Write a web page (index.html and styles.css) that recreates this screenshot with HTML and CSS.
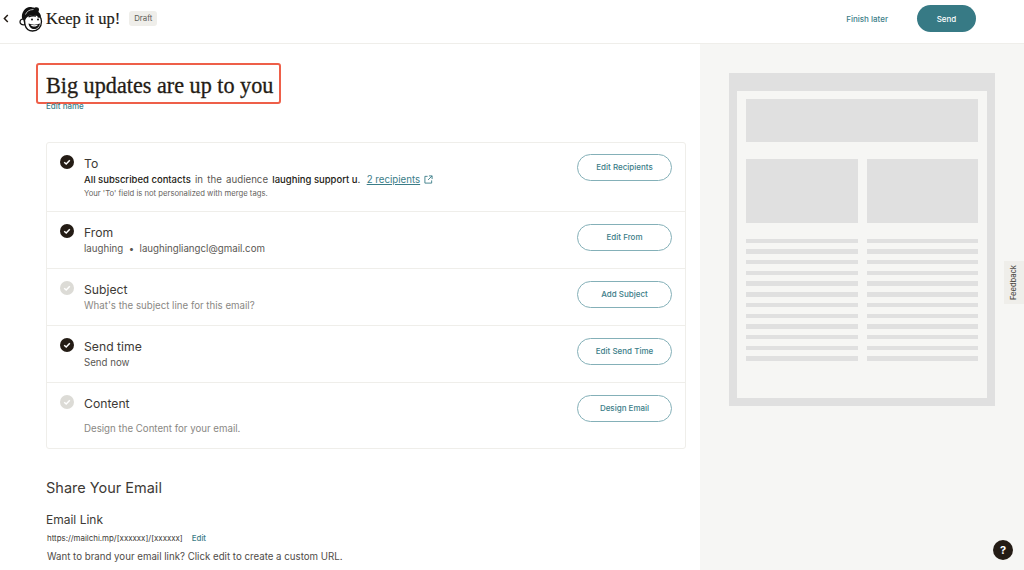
FILE: index.html
```html
<!DOCTYPE html>
<html lang="en">
<head>
<meta charset="utf-8">
<title>Keep it up!</title>
<link rel="stylesheet" href="styles.css">
</head>
<body>
<header class="topbar">
  <div class="topbar-left">
    <svg class="back" viewBox="0 0 6 9" width="6" height="9"><path d="M4.800 1 1.400 4.500l3.400 3.500" fill="none" stroke="#241c15" stroke-width="1.500"/></svg>
    <svg class="logo" viewBox="0 0 24 26" width="24" height="26">
      <path d="M3 12C2 6 7 0 12 1c2 .4 3 1 4 .5 2-.8 4 0 4 2 0 1-.5 1.500-.5 2.500 1.500 1 2.500 3 2.500 5L12 9c-2 0-4 1-5 3L6 15H4Z" fill="#111"/>
      <path d="M6.500 8.500c1-3 4-5 8-5" fill="none" stroke="#fff" stroke-width=".7"/>
      <path d="M1 16c0-2.500 2-3.500 4-2.500l1 5c-2.500.8-5-.2-5-2.500Z" fill="#fff" stroke="#111" stroke-width="1.300"/>
      <path d="M5.500 14C7 10 10 8.500 14 8.500c5 0 8.500 2 8.500 7 0 6-4 9.500-9 9.500-4 0-6.500-2.500-7.500-6Z" fill="#fff" stroke="#111" stroke-width="1.300"/>
      <path d="M9.500 11c2.500-1.300 5-1.500 7.500-.8M18.500 10.500c.8.100 1.500.4 2 .9" fill="none" stroke="#111" stroke-width="1.400"/>
      <circle cx="13" cy="13.500" r="1" fill="#111"/><circle cx="19" cy="13.500" r="1" fill="#111"/>
      <path d="M9.500 17.500c3.500 1.500 8 1.500 11.500 0-.5 3.500-3 5.500-5.800 5.500S10 21 9.500 17.500Z" fill="#111"/>
      <path d="M11.500 18.700c2.300.6 5.300.6 7.500 0-.5 1.200-2.200 1.800-3.800 1.800s-3.200-.6-3.700-1.800Z" fill="#fff"/>
    </svg>
    <span class="campaign">Keep it up!</span>
    <span class="badge">Draft</span>
  </div>
  <div class="topbar-right">
    <a class="finish">Finish later</a>
    <button class="send">Send</button>
  </div>
</header>
<div class="layout">
  <main class="main">
    <h1 class="title">Big updates are up to you</h1>
    <a class="edit-name">Edit name</a>
    <section class="checklist">
      <div class="row row-to">
        <svg class="check" viewBox="0 0 14 14" width="14" height="14"><circle cx="7" cy="7" r="7" fill="#241c15"/><path d="M4.200 7.200 6.200 9 9.800 5.200" fill="none" stroke="#fff" stroke-width="1.500"/></svg>
        <div class="row-body">
          <div class="row-title">To</div>
          <div class="row-text audience"><b>All subscribed contacts</b> in the audience <b>laughing support u.</b> <a class="recipients">2 recipients</a>
            <svg class="ext" viewBox="0 0 10 10" width="9" height="9"><path d="M4 1.500H1v7.500h7.500V6M5.500 1h3.500v3.500M9 1 4.500 5.500" fill="none" stroke="#3b7d88" stroke-width="1"/></svg>
          </div>
          <div class="row-note">Your 'To' field is not personalized with merge tags.</div>
        </div>
        <button class="action">Edit Recipients</button>
      </div>
      <div class="row">
        <svg class="check" viewBox="0 0 14 14" width="14" height="14"><circle cx="7" cy="7" r="7" fill="#241c15"/><path d="M4.200 7.200 6.200 9 9.800 5.200" fill="none" stroke="#fff" stroke-width="1.500"/></svg>
        <div class="row-body">
          <div class="row-title">From</div>
          <div class="row-text">laughing &nbsp;•&nbsp; laughingliangcl@gmail.com</div>
        </div>
        <button class="action">Edit From</button>
      </div>
      <div class="row">
        <svg class="check" viewBox="0 0 14 14" width="14" height="14"><circle cx="7" cy="7" r="7" fill="#dcdbd6"/><path d="M4.200 7.200 6.200 9 9.800 5.200" fill="none" stroke="#fff" stroke-width="1.500"/></svg>
        <div class="row-body">
          <div class="row-title">Subject</div>
          <div class="row-text muted">What's the subject line for this email?</div>
        </div>
        <button class="action">Add Subject</button>
      </div>
      <div class="row">
        <svg class="check" viewBox="0 0 14 14" width="14" height="14"><circle cx="7" cy="7" r="7" fill="#241c15"/><path d="M4.200 7.200 6.200 9 9.800 5.200" fill="none" stroke="#fff" stroke-width="1.500"/></svg>
        <div class="row-body">
          <div class="row-title">Send time</div>
          <div class="row-text">Send now</div>
        </div>
        <button class="action">Edit Send Time</button>
      </div>
      <div class="row row-content">
        <svg class="check" viewBox="0 0 14 14" width="14" height="14"><circle cx="7" cy="7" r="7" fill="#dcdbd6"/><path d="M4.200 7.200 6.200 9 9.800 5.200" fill="none" stroke="#fff" stroke-width="1.500"/></svg>
        <div class="row-body">
          <div class="row-title">Content</div>
          <div class="row-text muted spaced">Design the Content for your email.</div>
        </div>
        <button class="action">Design Email</button>
      </div>
    </section>
    <h2 class="share">Share Your Email</h2>
    <h3 class="link-title">Email Link</h3>
    <div class="link-line"><span>https://mailchi.mp/[xxxxxx]/[xxxxxx]</span><a class="link-edit">Edit</a></div>
    <p class="brand">Want to brand your email link? Click edit to create a custom URL.</p>
  </main>
  <aside class="preview">
    <div class="sheet">
      <div class="sheet-inner">
        <div class="ph-hero"></div>
        <div class="columns">
          <div class="column">
            <div class="ph-image"></div>
            <div class="lines"><i></i><i></i><i></i><i></i><i></i><i></i><i></i><i></i><i></i><i></i><i></i><i></i></div>
          </div>
          <div class="column">
            <div class="ph-image"></div>
            <div class="lines"><i></i><i></i><i></i><i></i><i></i><i></i><i></i><i></i><i></i><i></i><i></i><i></i></div>
          </div>
        </div>
      </div>
    </div>
    <div class="feedback"><span>Feedback</span></div>
    <div class="help">?</div>
  </aside>
</div>
</body>
</html>
```
FILE: styles.css
```css
* { box-sizing: border-box; }
html, body { margin: 0; height: 570px; overflow: hidden; }
body { font-family: Inter, "Liberation Sans", sans-serif; color: #241c15; background: #fff; }
a { color: #3b7d88; }
.topbar { height: 44px; display: flex; justify-content: space-between; align-items: center; border-bottom: 1px solid #efeeea; padding-bottom: 6px; }
.topbar-left { display: flex; align-items: center; padding-left: 3px; }
.back { margin-right: 10px; }
.logo { margin-right: 3px; }
.campaign { font-family: "Liberation Serif", serif; font-size: 16.500px; margin-right: 9px; -webkit-text-stroke: .2px #241c15; }
.badge { background: #efeeea; border-radius: 3px; font-size: 7.800px; color: #5c5a55; padding: 3px 5px; line-height: 9px; }
.topbar-right { display: flex; align-items: center; padding-right: 48px; }
.finish { font-size: 8px; font-weight: 500; margin-right: 29px; }
.send { width: 59px; height: 27px; border: 0; border-radius: 14px; background: #377a85; color: #fff; font: 500 8px Inter, sans-serif; }
.layout { display: flex; height: 526px; }
.main { width: 700px; padding: 19px 14px 0 46px; }
.title { margin: 0 0 -1px -10px; width: 245px; height: 41px; border: 2px solid #ee5f49; border-radius: 3px; padding-left: 8px; font: 400 22.200px/41px "Liberation Serif", serif; white-space: nowrap; -webkit-text-stroke: .3px #241c15; }
.edit-name { display: block; font-size: 8px; font-weight: 500; line-height: 6px; height: 39px; }
.checklist { border: 1px solid #efeeea; border-radius: 3px; width: 640px; }
.row { display: flex; align-items: flex-start; padding: 12px 13px 0 13px; height: 57px; border-top: 1px solid #efeeea; }
.row:first-child { border-top: 0; height: 68px; }
.row-content { height: 66px; }
.check { margin-right: 10px; flex: none; }
.row-body { flex: 1; }
.row-title { font-size: 12.200px; line-height: 17px; color: #3d3a36; }
.row-text { font-size: 9.700px; line-height: 15px; color: #5a5753; }
.row-text b { font-weight: 500; font-size: 9.500px; color: #241c15; word-spacing: 0; }
.audience { word-spacing: 1.500px; }
.row-text.muted { color: #8a8884; }
.row-text.spaced { margin-top: 9px; }
.recipients { text-decoration: underline; margin-left: 2px; word-spacing: 0; }
.ext { vertical-align: -1px; }
.row-note { font-size: 7.700px; line-height: 11px; color: #66635e; margin-top: 1px; }
.action { width: 95px; height: 27px; padding: 0 0 1px; border: 1px solid #84b0b8; border-radius: 14px; background: #fff; color: #3b7d88; font: 500 8px Inter, sans-serif; }
.row:first-child .action { margin-top: -1px; }
.share { margin: 29px 0 0; font-size: 14.500px; font-weight: 400; line-height: 20px; color: #3d3a36; }
.link-title { margin: 13px 0 0; font-size: 12px; font-weight: 400; line-height: 17px; color: #3d3a36; }
.link-line { margin-top: 4px; font-size: 7.900px; line-height: 12px; color: #3d3a36; padding-left: 1px; }
.link-edit { margin-left: 9px; font-weight: 500; }
.brand { margin: 5px 0 0 1px; font-size: 9.700px; line-height: 15px; color: #4f4c48; }
.preview { position: relative; width: 324px; background: #f6f6f4; padding: 29px 29px 0; }
.sheet { width: 266px; height: 333px; background: #e0e0e0; padding: 18px 8px 8px; }
.sheet-inner { height: 307px; background: #f6f6f4; padding: 8px 9px; }
.ph-hero { height: 43px; background: #e0e0e0; }
.columns { display: flex; gap: 9px; margin-top: 17px; }
.column { flex: 1; }
.ph-image { height: 64px; background: #e0e0e0; }
.lines { margin-top: 15.500px; display: flex; flex-direction: column; gap: 6.230px; }
.lines i { display: block; height: 4.500px; background: #e0e0e0; }
.feedback { position: absolute; right: 0; top: 217px; width: 20px; height: 43px; background: #efeeea; display: flex; align-items: center; justify-content: center; }
.feedback span { transform: rotate(-90deg); font-size: 7.500px; font-weight: 500; color: #4f4c48; }
.help { position: absolute; left: 293px; top: 496px; width: 20px; height: 20px; border-radius: 50%; background: #241c15; color: #fff; font-size: 11px; font-weight: 700; line-height: 20px; text-align: center; }
```
